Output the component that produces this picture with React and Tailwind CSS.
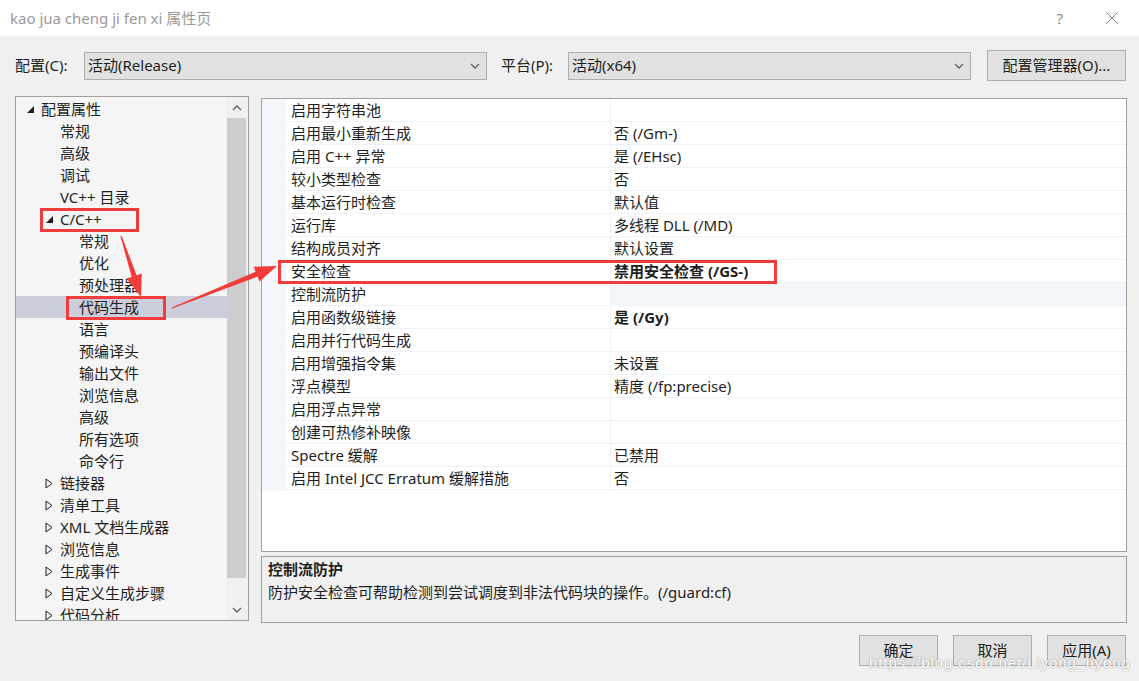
import React from 'react'

const font = { fontFamily: '"Noto Sans", "Noto Sans CJK SC", sans-serif' }

const tree = [
  { label: '配置属性', level: 0, icon: 'open' },
  { label: '常规', level: 1 },
  { label: '高级', level: 1 },
  { label: '调试', level: 1 },
  { label: 'VC++ 目录', level: 1 },
  { label: 'C/C++', level: 1, icon: 'open' },
  { label: '常规', level: 2 },
  { label: '优化', level: 2 },
  { label: '预处理器', level: 2 },
  { label: '代码生成', level: 2, selected: true },
  { label: '语言', level: 2 },
  { label: '预编译头', level: 2 },
  { label: '输出文件', level: 2 },
  { label: '浏览信息', level: 2 },
  { label: '高级', level: 2 },
  { label: '所有选项', level: 2 },
  { label: '命令行', level: 2 },
  { label: '链接器', level: 1, icon: 'closed' },
  { label: '清单工具', level: 1, icon: 'closed' },
  { label: 'XML 文档生成器', level: 1, icon: 'closed' },
  { label: '浏览信息', level: 1, icon: 'closed' },
  { label: '生成事件', level: 1, icon: 'closed' },
  { label: '自定义生成步骤', level: 1, icon: 'closed' },
  { label: '代码分析', level: 1, icon: 'closed' },
]

const props = [
  ['启用字符串池', ''],
  ['启用最小重新生成', '否 (/Gm-)'],
  ['启用 C++ 异常', '是 (/EHsc)'],
  ['较小类型检查', '否'],
  ['基本运行时检查', '默认值'],
  ['运行库', '多线程 DLL (/MD)'],
  ['结构成员对齐', '默认设置'],
  ['安全检查', '禁用安全检查 (/GS-)', 'bold'],
  ['控制流防护', '', 'sel'],
  ['启用函数级链接', '是 (/Gy)', 'bold'],
  ['启用并行代码生成', ''],
  ['启用增强指令集', '未设置'],
  ['浮点模型', '精度 (/fp:precise)'],
  ['启用浮点异常', ''],
  ['创建可热修补映像', ''],
  ['Spectre 缓解', '已禁用'],
  ['启用 Intel JCC Erratum 缓解措施', '否'],
]

function Chevron({ down = true, color = '#606060' }) {
  return (
    <svg width="10" height="6" viewBox="0 0 10 6">
      <polyline
        points={down ? '1,1 5,5 9,1' : '1,5 5,1 9,5'}
        fill="none"
        stroke={color}
        strokeWidth="1.3"
      />
    </svg>
  )
}

function TreeIcon({ type }) {
  if (type === 'open')
    return (
      <svg width="9" height="9" viewBox="0 0 9 9">
        <polygon points="8,1 8,8 1,8" fill="#1e1e1e" />
      </svg>
    )
  if (type === 'closed')
    return (
      <svg width="8" height="11" viewBox="0 0 8 11">
        <polygon points="1,1 7,5.5 1,10" fill="none" stroke="#1e1e1e" strokeWidth="1" />
      </svg>
    )
  return null
}

function Combo({ text }) {
  return (
    <div className="w-[403px] h-[28px] bg-[#e1e1e1] border border-[#adadad] flex items-center justify-between pl-[3px] pr-[6px]">
      <span className="text-[15px] text-[#1e1e1e] leading-none">{text}</span>
      <Chevron />
    </div>
  )
}

function arrow(x1, y1, x2, y2) {
  const dx = x2 - x1
  const dy = y2 - y1
  const len = Math.hypot(dx, dy)
  const ux = dx / len
  const uy = dy / len
  const nx = -uy
  const ny = ux
  const headLen = 22
  const headW = 8
  const shaftW = 2.6
  const bx = x2 - ux * headLen
  const by = y2 - uy * headLen
  const pts = [
    [x1 + nx * 0.6, y1 + ny * 0.6],
    [bx + nx * shaftW, by + ny * shaftW],
    [bx + nx * headW, by + ny * headW],
    [x2, y2],
    [bx - nx * headW, by - ny * headW],
    [bx - nx * shaftW, by - ny * shaftW],
    [x1 - nx * 0.6, y1 - ny * 0.6],
  ]
  return pts.map((p) => p.join(',')).join(' ')
}

function Button({ children }) {
  return (
    <div className="w-[79px] h-[31px] bg-[#e1e1e1] border border-[#adadad] flex items-center justify-center text-[15px] text-[#1e1e1e]">
      {children}
    </div>
  )
}

export default function App() {
  return (
    <div className="relative w-[1139px] h-[681px] bg-[#f0f0f0] overflow-hidden" style={font}>
      {/* title bar */}
      <div className="h-[36px] bg-white flex items-center pl-[10px] pr-[20px]">
        <span className="text-[15px] text-[#999999]">kao jua cheng ji fen xi 属性页</span>
        <div className="ml-auto flex items-center gap-[42px]">
          <span className="text-[15px] text-[#8a8a8a]">?</span>
          <svg width="14" height="14" viewBox="0 0 14 14">
            <path d="M1 1 L13 13 M13 1 L1 13" stroke="#8a8a8a" strokeWidth="1" />
          </svg>
        </div>
      </div>

      {/* config row */}
      <div className="mt-[14px] h-[31px] flex items-center pl-[15px]">
        <span className="w-[69px] text-[15px] text-[#1e1e1e]">配置(C):</span>
        <Combo text="活动(Release)" />
        <span className="ml-[14px] w-[67px] text-[15px] text-[#1e1e1e]">平台(P):</span>
        <Combo text="活动(x64)" />
        <div className="ml-[16px] w-[139px] h-[31px] bg-[#e1e1e1] border border-[#adadad] flex items-center justify-center text-[15px] text-[#1e1e1e]">
          配置管理器(O)...
        </div>
      </div>

      {/* main */}
      <div className="mt-[15px] flex pl-[15px] pr-[12px] gap-[12px]">
        {/* tree */}
        <div className="w-[234px] h-[525px] border border-[#a0a0a0] bg-[#f5f5f5] flex">
          <div className="flex-1 overflow-hidden pt-[1px]">
            {tree.map((t, i) => (
              <div
                key={i}
                className={`h-[22px] flex items-center text-[15px] text-[#1e1e1e] whitespace-nowrap ${
                  t.selected ? 'bg-[#cccedb]' : ''
                }`}
                style={{ paddingLeft: 10 + t.level * 19 }}
              >
                <span className="w-[15px] flex items-center">
                  <TreeIcon type={t.icon} />
                </span>
                <span className="leading-none">{t.label}</span>
              </div>
            ))}
          </div>
          <div className="w-[21px] bg-[#f0f0f0] flex flex-col items-start">
            <div className="h-[21px] w-[19px] flex items-center justify-center">
              <Chevron down={false} />
            </div>
            <div className="w-[19px] h-[460px] bg-[#cdcdcd]" />
            <div className="flex-1 w-[19px] flex items-end justify-center pb-[7px]">
              <Chevron />
            </div>
          </div>
        </div>

        {/* right column */}
        <div className="flex-1 flex flex-col">
          <div className="mt-[2px] h-[454px] border border-[#a0a0a0] bg-white flex">
            <div className="w-[24px] bg-[#f3f6fb] h-[392px]" />
            <div className="flex-1">
              {props.map(([name, value, kind], i) => (
                <div key={i} className="h-[23px] flex border-b border-[#eef1f6] text-[15px] text-[#1e1e1e]">
                  <div className="w-[324px] flex items-center pl-[5px] whitespace-nowrap">{name}</div>
                  <div
                    className={`flex-1 flex items-center pl-[3px] border-l border-[#eef1f6] ${
                      kind === 'bold' ? 'font-bold' : ''
                    } ${kind === 'sel' ? 'bg-[#f3f6fb]' : ''}`}
                  >
                    {value}
                  </div>
                </div>
              ))}
            </div>
          </div>
          <div className="mt-[4px] h-[67px] border border-[#a0a0a0] bg-[#f0f0f0] pl-[6px] pt-[1px] text-[15px] text-[#1e1e1e]">
            <div className="font-bold h-[22px] flex items-center">控制流防护</div>
            <div className="h-[24px] flex items-center">防护安全检查可帮助检测到尝试调度到非法代码块的操作。(/guard:cf)</div>
          </div>
        </div>
      </div>

      {/* buttons */}
      <div className="mt-[12px] flex justify-end gap-[15px] pr-[13px]">
        <Button>确定</Button>
        <Button>取消</Button>
        <Button>应用(A)</Button>
      </div>

      {/* annotations */}
      <svg className="absolute left-0 top-0 pointer-events-none" width="1139" height="681">
        <g fill="none" stroke="#f23c3c" strokeWidth="3">
          <rect x="41.5" y="209.5" width="96" height="21" />
          <rect x="67.5" y="297.5" width="97" height="21" />
          <rect x="279.5" y="261.5" width="496" height="21" />
        </g>
        <polygon points={arrow(121, 236, 141, 297)} fill="#f23c3c" />
        <polygon points={arrow(172, 308, 277, 266)} fill="#f23c3c" />
      </svg>

      {/* watermark */}
      <div
        className="absolute left-[869px] top-[652px] text-[15px] text-white tracking-[0.9px] [text-shadow:0_0_1px_#9a9a9a,0_0_2px_#b0b0b0]"
        style={{ fontFamily: '"Liberation Sans", sans-serif' }}
      >
        https://blog.csdn.net/Liyong_liyong
      </div>
    </div>
  )
}
